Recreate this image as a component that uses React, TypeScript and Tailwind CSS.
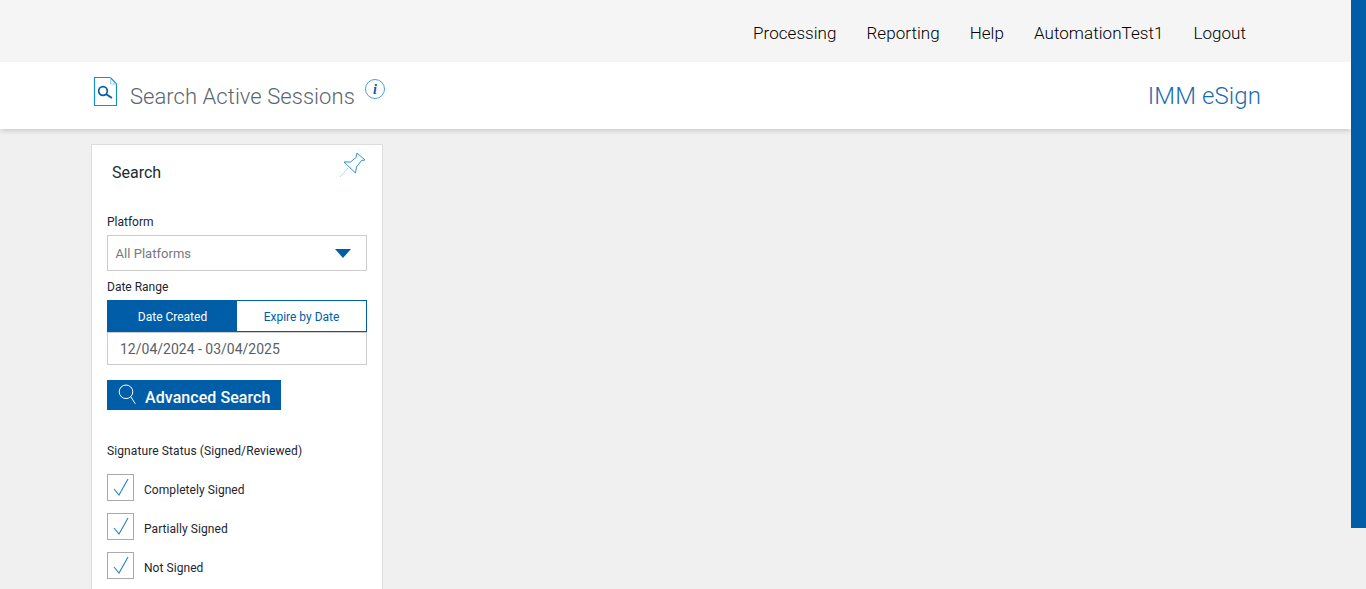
import React from "react";

const Check = () => (
  <span className="flex h-[27px] w-[27px] shrink-0 items-center justify-center border border-[#aaaaaa] bg-white">
    <svg width="27" height="27" viewBox="0 0 27 27" fill="none" stroke="#1f83c9" strokeWidth="1.1" className="shrink-0">
      <path d="M7 15 L12 21 L21 5" />
    </svg>
  </span>
);

const CheckRow = ({ label }: { label: string }) => (
  <div className="flex h-[27px] items-center gap-[10px]">
    <Check />
    <span className="pt-[4px] text-[12px] tracking-[0.06px] text-[#1c2530]">{label}</span>
  </div>
);

export default function App() {
  return (
    <div className="flex h-[589px] w-[1366px] overflow-hidden bg-[#f0f0f0] font-['Roboto',sans-serif]">
      <div className="flex min-w-0 flex-1 flex-col">
        <nav className="flex h-[62px] items-center justify-end gap-[30px] bg-[#f5f5f5] pt-[5px] pr-[105px] text-[17px] font-light tracking-[0.05px] text-black">
          <span>Processing</span>
          <span>Reporting</span>
          <span>Help</span>
          <span>AutomationTest1</span>
          <span>Logout</span>
        </nav>
        <header className="z-10 flex h-[67px] items-center justify-between bg-white pr-[90px] pl-[93px] shadow-[0_3px_5px_-1px_rgba(0,0,0,0.16)]">
          <div className="flex items-center">
            <svg width="25" height="31" viewBox="0 0 25 31" fill="none" className="mb-[8px]">
              <path d="M1.5 1.5 H17.5 L23.5 8 V29.5 H1.5 Z" stroke="#1590d0" strokeWidth="1.2" />
              <path d="M17.5 1.5 V8 H23.5" stroke="#9ccfe8" strokeWidth="1" />
              <circle cx="10" cy="15" r="4.3" stroke="#005ea8" strokeWidth="1.7" />
              <path d="M13.2 18.2 L19 22" stroke="#005ea8" strokeWidth="1.9" />
            </svg>
            <h1 className="mt-[1px] ml-[12px] text-[22px] tracking-[0.05px] font-light text-[#5b6670]">Search Active Sessions</h1>
            <span className="mb-[13px] ml-[10px] flex h-[20px] w-[20px] items-center justify-center rounded-full border border-[#4c9fd2] font-['Liberation_Serif',serif] text-[14px] font-bold text-[#005ea8] italic">
              i
            </span>
          </div>
          <div className="text-[24px] font-light tracking-[0.1px] text-[#1a6db0]">IMM eSign</div>
        </header>
        <main className="min-h-0 flex-1 pt-[15px] pl-[91px]">
          <section className="h-[460px] w-[292px] border border-[#dddddd] bg-white px-[15px]">
            <div className="flex h-[55px] items-start justify-between">
              <h2 className="mt-[16px] ml-[5px] text-[16px] text-[#222b33]">Search</h2>
              <svg width="26" height="26" viewBox="0 0 26 26" fill="none" stroke="#2f93cf" strokeWidth="1" className="mt-[6px] overflow-visible">
                <path d="M16 2 L24 9 L20.5 9.5 L15.5 16 L14.5 22 L3 11 L9.5 11 L15 6.5 Z" />
                <path d="M7 17 L-1 26" stroke="#b5dcf0" />
              </svg>
            </div>
            <div className="mt-[14px] text-[12px] leading-[16px] text-[#1c2530]">Platform</div>
            <div className="mt-[5px] flex h-[36px] items-center justify-between border border-[#cccccc] pt-[1px] pr-[15px] pl-[7.5px] text-[13px] tracking-[0.03px] text-[#77797c]">
              <span>All Platforms</span>
              <span className="h-0 w-0 border-x-[8px] border-t-[9px] border-x-transparent border-t-[#005ea8]" />
            </div>
            <div className="mt-[8px] text-[12px] leading-[16px] text-[#1c2530]">Date Range</div>
            <div className="mt-[5px] flex h-[32px] border border-[#005ea8] text-[12px]">
              <span className="flex w-[129px] items-center justify-center bg-[#005ea8] pt-[1px] text-white">Date Created</span>
              <span className="flex flex-1 items-center justify-center bg-white pt-[1px] text-[#005ea8]">Expire by Date</span>
            </div>
            <div className="flex h-[33px] items-center border border-[#cccccc] pt-[1px] pl-[12px] text-[14px] text-[#5a5f66]">
              12/04/2024 - 03/04/2025
            </div>
            <button className="mt-[15px] flex h-[30px] w-[174px] items-center bg-[#005ea8] pl-[11px] text-[16px] font-medium tracking-[0.06px] text-white">
              <svg width="20" height="22" viewBox="0 0 20 22" fill="none" stroke="#ffffff" strokeWidth="1" className="mb-[3px]">
                <circle cx="8" cy="8.8" r="6.8" />
                <path d="M12.8 13.8 L17.3 20.8" />
              </svg>
              <span className="mt-[5px] ml-[7px]">Advanced Search</span>
            </button>
            <div className="mt-[33px] text-[12px] leading-[16px] tracking-[0.1px] text-[#1c2530]">Signature Status (Signed/Reviewed)</div>
            <div className="mt-[15px] flex flex-col gap-[12px]">
              <CheckRow label="Completely Signed" />
              <CheckRow label="Partially Signed" />
              <CheckRow label="Not Signed" />
            </div>
          </section>
        </main>
      </div>
      <aside className="h-[528px] w-[15px] shrink-0 bg-[#005ea8]" />
    </div>
  );
}
